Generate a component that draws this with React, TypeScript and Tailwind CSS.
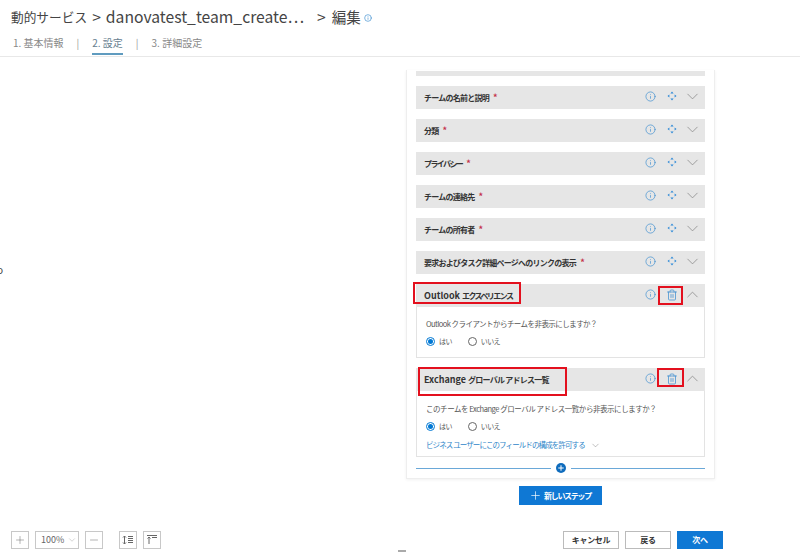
import React from 'react';
import { ChevronDown, ChevronUp, Info, Minus, Plus, Trash2 } from 'lucide-react';

const jp = "font-['Noto_Sans_CJK_JP','Open_Sans',sans-serif]";

const MoveIcon = () => (
  <svg width="12" height="12" viewBox="0 0 12 12" fill="#2b88d8">
    <path d="M6 1.500 L7.600 3.400 H4.400 Z" />
    <path d="M6 10.500 L7.600 8.600 H4.400 Z" />
    <path d="M1.500 6 L3.400 4.400 V7.600 Z" />
    <path d="M10.500 6 L8.600 4.400 V7.600 Z" />
  </svg>
);

// CJK runs of the row titles are set tighter than the latin ones
const Cjk = ({ children }: { children: React.ReactNode }) => (
  <span className="text-[8px] tracking-[-0.75px]">{children}</span>
);
const Kana = ({ children }: { children: React.ReactNode }) => (
  <span className="text-[8px] tracking-[-1.6px]">{children}</span>
);

const Row = ({ title, kana }: { title: string; kana?: boolean }) => (
  <div className="h-[23px] bg-[#e6e6e6] flex items-center pl-2 shrink-0">
    <div className="flex-1 font-bold text-[#333] text-[9px]">
      {kana ? <Kana>{title}</Kana> : <Cjk>{title}</Cjk>} <span className="text-[#c4314b] ml-[2px]">*</span>
    </div>
    <Info size={11} className="text-[#3f8fd0] mr-[10px] -mt-[3px]" strokeWidth={1.5} />
    <div className="mr-[5px] -mt-[3px]"><MoveIcon /></div>
    <ChevronDown size={19} className="text-[#8a8a8a] mr-[3px] -mt-[3px]" strokeWidth={1} />
  </div>
);

const OpenRow = ({ title, nameBox, trashBox }: { title: React.ReactNode; nameBox: string; trashBox: string }) => (
  <div className="relative h-[23px] bg-[#e6e6e6] flex items-center pl-2 shrink-0">
    <div className="flex-1 text-[9px] font-bold text-[#333]">{title}</div>
    <Info size={11} className="text-[#3f8fd0] mr-[10px] -mt-[3px]" strokeWidth={1.5} />
    <Trash2 size={12} className="text-[#3f8fd0] mr-[5px] -mt-[1px]" strokeWidth={1.5} />
    <ChevronUp size={19} className="text-[#8a8a8a] mr-[3px] -mt-[3px]" strokeWidth={1} />
    <div className={`absolute border-2 border-[#e3101e] ${nameBox}`} />
    <div className={`absolute border-2 border-[#e3101e] ${trashBox}`} />
  </div>
);

const Radios = () => (
  <div className="flex items-center text-[7px] tracking-[-0.6px] text-[#555] mt-[6px] leading-[10px]">
    <span className="w-[9px] h-[9px] rounded-full border border-[#0078d4] flex items-center justify-center mr-[4px]">
      <span className="w-[5px] h-[5px] rounded-full bg-[#0078d4]" />
    </span>
    はい
    <span className="w-[9px] h-[9px] rounded-full border border-[#666] ml-[16px] mr-[4px]" />
    いいえ
  </div>
);

const ToolButton = ({ children }: { children: React.ReactNode }) => (
  <div className="w-[18px] h-[18px] border border-[#c8c8c8] flex items-center justify-center text-[#666]">{children}</div>
);

export default function App() {
  return (
    <div className={`relative w-[800px] h-[552px] bg-white overflow-hidden flex flex-col ${jp}`}>
      <header className="h-[57px] shrink-0 border-b border-[#e8e8e8] pl-[11px]">
        <div className="flex items-center h-[32px] pt-[1px] text-[15.7px] text-[#444] whitespace-nowrap">
          <span className="text-[12.7px]">動的サービス</span>
          <span className="ml-[5px]">&gt;</span>
          <span className="ml-[5px]">danovatest_team_create⋯</span>
          <span className="ml-[13px]">&gt;</span>
          <span className="ml-[6px] text-[14.500px]">編集</span>
          <Info size={8} className="text-[#3f8fd0] ml-[3px] mt-[3px]" />
        </div>
        <div className="flex items-start text-[10px] text-[#888] leading-[16px]">
          <span className="ml-[2px] mt-[3px]">1. 基本情報</span>
          <span className="mx-[13px] mt-[3px] text-[#999]">|</span>
          <span className="text-[#66808f] pt-[3px] pb-[2px] border-b-2 border-[#5f9bbf]">2. 設定</span>
          <span className="mx-[13px] mt-[3px] text-[#999]">|</span>
          <span className="mt-[3px]">3. 詳細設定</span>
        </div>
      </header>

      <main className="flex-1 relative flex flex-col items-start pl-[406px]">
        <div className="w-[309px] h-[409px] mt-[13px] border-x border-b border-[#eee] shadow-[0_1px_3px_rgba(0,0,0,0.06)] px-[9px] flex flex-col">
          <div className="h-[5px] mt-px bg-[#e6e6e6] mb-[10px] shrink-0" />
          <div className="flex flex-col gap-[10px]">
            <Row title="チームの名前と説明" />
            <Row title="分類" />
            <Row title="プライバシー" kana />
            <Row title="チームの連絡先" />
            <Row title="チームの所有者" />
            <Row title="要求およびタスク詳細ページへのリンクの表示" />
            <div>
              <OpenRow
                title={<>Outlook <Kana>エクスペリエンス</Kana></>}
                nameBox="-left-[3px] -top-[2px] w-[108px] h-[22px]"
                trashBox="left-[242px] top-[2px] w-[25px] h-[19px]"
              />
              <div className="h-[51px] border-x border-b border-[#e3e3e3] pl-[9px] pt-[11px] text-[7.500px] tracking-[-0.550px] leading-[12px] text-[#555]">
                Outlook クライアントからチームを非表示にしますか？
                <Radios />
              </div>
            </div>
            <div>
              <OpenRow
                title={<>Exchange <Cjk>グローバル アドレス一覧</Cjk></>}
                nameBox="left-[2px] -top-[1px] w-[149px] h-[29px]"
                trashBox="left-[241px] top-0 w-[27px] h-[19px]"
              />
              <div className="h-[66px] border-x border-b border-[#e3e3e3] pl-[9px] pt-[12px] text-[7.500px] tracking-[-0.450px] leading-[12px] text-[#555]">
                このチームを Exchange グローバル アドレス一覧から非表示にしますか？
                <Radios />
                <div className="flex items-center text-[#2f86c9] tracking-[-0.900px] mt-[8px]">
                  ビジネス ユーザーにこのフィールドの構成を許可する
                  <ChevronDown size={11} className="text-[#777] ml-[5px]" strokeWidth={1} />
                </div>
              </div>
            </div>
          </div>
          <div className="flex items-center mt-[6px]">
            <div className="flex-1 h-px bg-[#6aa8d8]" />
            <div className="w-[10px] h-[10px] rounded-full bg-[#0f6cbd] mx-[5px] flex items-center justify-center">
              <Plus size={8} className="text-white" strokeWidth={3} />
            </div>
            <div className="flex-1 h-px bg-[#6aa8d8]" />
          </div>
        </div>
        <div className="ml-[113px] mt-[7px] w-[83px] h-[19px] bg-[#0f78d4] text-white text-[8px] tracking-[-1.300px] font-bold flex items-center pl-[10px]">
          <Plus size={13} strokeWidth={1.25} className="mr-[2px]" />
          新しいステップ
        </div>
        <span className="absolute -left-[3px] top-[208px] text-[10px] text-[#444] leading-none">o</span>
      </main>

      <footer className="h-[21px] shrink-0 flex items-start">
        <div className="flex items-center gap-[6px] pl-[11px]">
          <ToolButton><Plus size={12} strokeWidth={1} /></ToolButton>
          <div className="w-[44px] h-[18px] border border-[#c8c8c8] text-[9px] text-[#666] flex items-center pl-[5px]">
            100%
            <ChevronDown size={10} className="text-[#999] ml-[3px]" strokeWidth={1} />
          </div>
          <ToolButton><Minus size={12} strokeWidth={1} /></ToolButton>
          <div className="ml-[10px] flex gap-[6px]">
            <ToolButton>
              <svg width="12" height="12" viewBox="0 0 12 12" fill="none" stroke="#666" strokeWidth="1">
                <path d="M2.500 2v8M1 3.500L2.500 2 4 3.500M1 8.500L2.500 10 4 8.500M6 2.500h5M6 4.500h5M6 6.500h5M6 8.500h5" />
              </svg>
            </ToolButton>
            <ToolButton>
              <svg width="12" height="12" viewBox="0 0 12 12" fill="none" stroke="#666" strokeWidth="1">
                <path d="M1 1.500h10M3 3v7M1.500 4.500L3 3l1.500 1.500M6 3.500h5" />
              </svg>
            </ToolButton>
          </div>
        </div>
        <div className="ml-auto mr-[77px] flex gap-[6px] text-[8px] tracking-[-0.300px] font-bold text-[#333]">
          <div className="w-[56px] h-[18px] border border-[#bbb] flex items-center justify-center">キャンセル</div>
          <div className="w-[46px] h-[18px] border border-[#bbb] flex items-center justify-center">戻る</div>
          <div className="w-[46px] h-[18px] bg-[#0f78d4] text-white flex items-center justify-center">次へ</div>
        </div>
      </footer>
      <div className="absolute left-[398px] bottom-0 w-[8px] h-[2px] bg-[#aaa]" />
    </div>
  );
}
